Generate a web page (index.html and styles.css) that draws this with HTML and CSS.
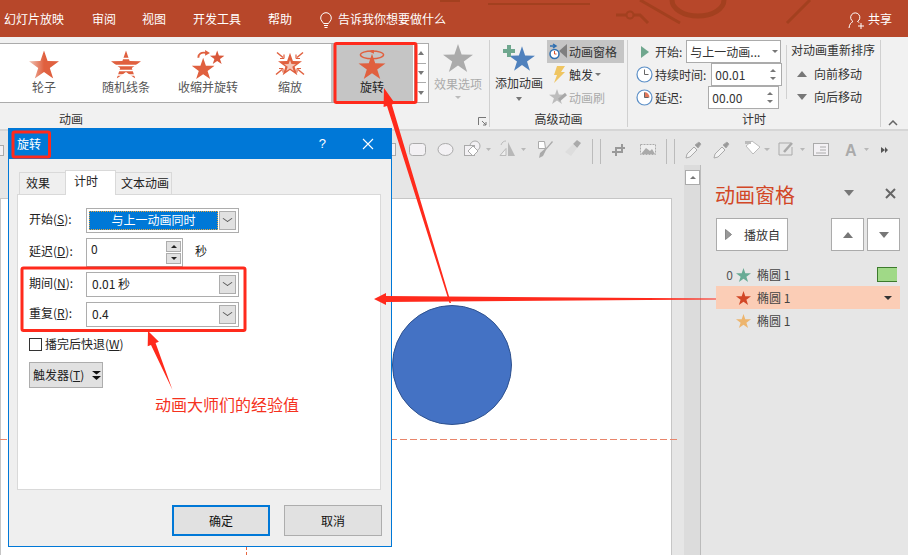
FILE: index.html
```html
<!DOCTYPE html>
<html lang="zh">
<head>
<meta charset="utf-8">
<title>动画窗格</title>
<link rel="stylesheet" href="styles.css">
</head>
<body>

<svg class="defs" width="0" height="0">
  <defs>
    <linearGradient id="fade" x1="0" x2="1" y1="0" y2="0">
      <stop offset="0" stop-color="#f0c4b6"/>
      <stop offset=".5" stop-color="#e0603f"/>
    </linearGradient>
  </defs>
  <symbol id="star" viewBox="0 0 30 28"><polygon points="15,0 18.6,10.4 30,10.7 20.8,17.4 24.2,28 15,21.6 5.8,28 9.2,17.4 0,10.7 11.4,10.4"/></symbol>
</svg>

<div class="app">

  <div class="titlebar">
    <svg class="circuit" width="908" height="37" viewBox="0 0 908 37">
      <g fill="none" stroke="#a3401f">
        <path d="M440 1h20M488 4h102" stroke-width="2"/>
        <path d="M616 15h10M634 15h6l8 8" stroke-width="3"/>
        <circle cx="630" cy="15" r="3.500" stroke-width="2"/>
        <path d="M640 0l40 23M787 23l23 -23" stroke-width="3"/>
        <path d="M672 0a26 16 0 0 0 52 0" stroke-width="5"/>
      </g>
    </svg>
    <span class="tab tab-show">幻灯片放映</span>
    <span class="tab tab-review">审阅</span>
    <span class="tab tab-view">视图</span>
    <span class="tab tab-dev">开发工具</span>
    <span class="tab tab-help">帮助</span>
    <svg class="bulb" width="12" height="17" viewBox="0 0 12 17"><path d="M3.5 11.5C2.5 9.5 .7 8.6 .7 6a5.3 5.3 0 0 1 10.6 0c0 2.600-1.800 3.500-2.800 5.500zM4 13.500h4M4.500 15.500h3" fill="none" stroke="#fff"/></svg>
    <span class="tab tab-tell">告诉我你想要做什么</span>
    <svg class="person" width="17" height="17" viewBox="0 0 17 17"><path d="M1 16c.5-4 2-5.500 4-6.500a4.600 4.600 0 1 1 4.500 0c.8.400 1.300.7 1.800 1.200M10 14h6M13 11v6" fill="none" stroke="#fff"/></svg>
    <span class="tab">共享</span>
  </div>

  <div class="ribbon">
    <div class="group group-anim">
      <div class="group-body">
        <div class="gallery">
          <div class="effect">
            <svg class="effect-icon" width="30" height="28" viewBox="0 0 30 28"><use href="#star" fill="url(#fade)"/></svg>
            <span>轮子</span>
          </div>
          <div class="effect">
            <svg class="effect-icon" width="30" height="28" viewBox="0 0 30 28"><use href="#star" fill="#e0603f"/><path d="M0 8h30M0 15h30M0 20h30M0 24.500h30" stroke="#fff" stroke-width="1.500"/></svg>
            <span>随机线条</span>
          </div>
          <div class="effect">
            <svg class="effect-icon" width="34" height="30" viewBox="0 0 34 30"><use href="#star" x="0" y="8" width="24" height="22" fill="#e0603f"/><use href="#star" x="19" y="0" width="15" height="15" fill="#d9583a"/><path d="M7 8c0-4 3-6 8-5" fill="none" stroke="#e0603f" stroke-width="2"/><path d="M14 0l5 3-5 3z" fill="#e0603f"/></svg>
            <span>收缩并旋转</span>
          </div>
          <div class="effect">
            <svg class="effect-icon" width="30" height="28" viewBox="0 0 30 28"><use href="#star" x="3" width="24" height="27" fill="#e0603f"/><use href="#star" x="9" y="9" width="12" height="12" fill="#f3c6b8"/><path d="M2 2l6 5M28 2l-6 5M1 24l6-5M29 24l-6-5" stroke="#e0603f" stroke-width="1.500"/><path d="M9 8V4M9 8H5M21 8V4M21 8h4M8 18v4M8 18H4M22 18v4M22 18h4" stroke="#e0603f" stroke-width="1.200"/></svg>
            <span>缩放</span>
          </div>
          <div class="effect effect-on">
            <svg class="effect-icon" width="30" height="30" viewBox="0 0 30 30"><use href="#star" y="4" width="30" height="26" fill="#e0603f"/><ellipse cx="15" cy="5" rx="12" ry="4" fill="none" stroke="#e0603f" stroke-width="1.500"/><path d="M17 -1l-5 2.500 5 2.500z" fill="#e0603f"/></svg>
            <span>旋转</span>
          </div>
          <div class="gallery-spin">
            <i class="cell"><b class="tri-up"></b></i>
            <i class="cell"><b class="tri-down"></b></i>
            <i class="cell cell-more"><b class="tri-down"></b></i>
          </div>
        </div>
        <div class="effect-options">
          <svg width="30" height="28" viewBox="0 0 30 28"><use href="#star" fill="#ababab"/></svg>
          <span>效果选项</span>
          <b class="tri-down tri-pale"></b>
        </div>
      </div>
      <div class="group-label label-anim">动画</div>
      <svg class="launcher" width="9" height="9" viewBox="0 0 9 9"><path d="M.5 8V.5H8M4 4l4 4M8 5v3H5" fill="none" stroke="#777"/></svg>
    </div>

    <div class="group group-adv">
      <div class="group-body">
        <div class="add-anim">
          <svg width="32" height="29" viewBox="0 0 32 29"><use href="#star" x="6" y="2" width="26" height="27" fill="#4f81bd"/><path d="M0 8h12M6 2v12" stroke="#6fa78e" stroke-width="4"/></svg>
          <span>添加动画</span>
          <b class="tri-down"></b>
        </div>
        <div class="adv-list">
          <div class="adv-item adv-on">
            <svg width="18" height="17" viewBox="0 0 18 17"><circle cx="5.500" cy="11" r="4.500" fill="#fff" stroke="#2f6fb0" stroke-width="1.500"/><path d="M5.500 8v3h2" fill="none" stroke="#d9532c"/><path d="M1 3h5M4 1l3 2-3 2" fill="none" stroke="#2f6fb0" stroke-width="1.500"/><path d="M18 1v14l-8-7z" fill="#7f7f7f"/></svg>
            <span>动画窗格</span>
          </div>
          <div class="adv-item">
            <svg width="18" height="17" viewBox="0 0 18 17"><path d="M8 0h8l-4 6h4L5 17l3-8H5z" fill="#efc561"/></svg>
            <span>触发</span><b class="tri-down tri-small"></b>
          </div>
          <div class="adv-item adv-dim">
            <svg width="18" height="17" viewBox="0 0 18 17"><use href="#star" width="16" height="15" fill="#bdbdbd"/><path d="M10 11l7-6" stroke="#a8a8a8" stroke-width="3"/></svg>
            <span>动画刷</span>
          </div>
        </div>
      </div>
      <div class="group-label">高级动画</div>
    </div>

    <div class="group group-timing">
      <div class="group-body">
        <div class="timing">
          <div class="timing-row">
            <svg class="timing-icon" width="17" height="17" viewBox="0 0 17 17"><path d="M5 3l8 6-8 6z" fill="#6fa78e"/></svg>
            <span class="timing-name">开始:</span>
            <div class="field field-start"><span>与上一动画...</span><b class="tri-down tri-small"></b></div>
          </div>
          <div class="timing-row">
            <svg class="timing-icon" width="17" height="17" viewBox="0 0 17 17"><circle cx="8.500" cy="8.500" r="7.500" fill="#fff" stroke="#5b8fc7" stroke-width="1.200"/><path d="M8.500 3.500v5h4" fill="none" stroke="#666"/></svg>
            <span class="timing-name">持续时间:</span>
            <div class="field field-dur"><span>00.01</span><i class="spin"><b class="tri-up tri-small"></b><b class="tri-down tri-small"></b></i></div>
          </div>
          <div class="timing-row">
            <svg class="timing-icon" width="17" height="17" viewBox="0 0 17 17"><circle cx="8.500" cy="8.500" r="7.500" fill="#fff" stroke="#5b8fc7" stroke-width="1.200"/><path d="M8.500 3v5.500h5A5.500 5.500 0 0 0 8.500 3z" fill="#e2765a"/><path d="M8.500 3.500v5h4" fill="none" stroke="#666"/></svg>
            <span class="timing-name">延迟:</span>
            <div class="field field-delay"><span>00.00</span><i class="spin"><b class="tri-up tri-small"></b><b class="tri-down tri-small"></b></i></div>
          </div>
        </div>
        <div class="reorder">
          <div class="reorder-title">对动画重新排序</div>
          <div class="reorder-item"><b class="tri-up"></b><span>向前移动</span></div>
          <div class="reorder-item"><b class="tri-down"></b><span>向后移动</span></div>
        </div>
      </div>
      <div class="group-label">计时</div>
    </div>

    <svg class="collapse" width="10" height="6" viewBox="0 0 10 6"><path d="M1 5l4-4 4 4" fill="none" stroke="#666" stroke-width="1.500"/></svg>
  </div>

  <svg class="toolbar" width="908" height="34" viewBox="0 0 908 34">
    <g fill="#f3f1f4" stroke="#aaa">
      <rect x="-12.500" y="14.500" width="16" height="10"/>
      <rect x="380.500" y="12.500" width="15" height="12"/>
      <rect x="409.500" y="12.500" width="16" height="12" rx="3"/>
      <ellipse cx="445.500" cy="18.500" rx="7.500" ry="6"/>
      <circle cx="475" cy="15" r="5"/>
      <rect x="464.500" y="14.500" width="10" height="10"/>
      <path d="M473 15l5 5-5 5-5-5z" fill="#fff"/>
    </g>
    <g fill="#b8b8b8">
      <path d="M486 17h5l-2.500 3zM521 17h5l-2.500 3zM764 17h6l-3 3zM800 17h5l-2.500 3zM864 17h5l-2.500 3z"/>
      <path d="M508 11l7 14h-7z"/>
      <path d="M500 24.500l6-7v7z" fill="#eee" stroke="#bbb"/>
      <path d="M501 14c1-3 3-4 5-4" fill="none" stroke="#bbb"/>
      <path d="M538.500 10.500h6l1 7h-7z" fill="#fff" stroke="#aaa"/>
      <path d="M553 11l-7 8-3 6-4 2 1-5 7-6 5-6z" fill="#aaa"/>
      <path d="M581 12l-4-3-4 4 4 4z" fill="#aaa"/>
      <path d="M573 13l4 4-6 8-6-4z" fill="#ddd"/>
      <path d="M640.500 13.500h15v10h-15z" fill="#eee" stroke="#aaa" stroke-dasharray="2 1"/>
      <path d="M641 23l5-6 4 3 2-2 3 5z" fill="#aaa"/>
      <path d="M746 15l6-5 8 6-7 7z" fill="#fff" stroke="#bbb"/>
      <path d="M745 10h6v3h-6z" fill="#bbb"/>
      <path d="M881 16l4 3-4 3zM885 16l3 3-3 3z" fill="#555"/>
    </g>
    <g fill="none" stroke="#aaa" stroke-width="1">
      <path d="M592.500 8v25M600.500 8v25M666.500 8v25M674.500 8v25" stroke="#bbb"/>
      <path d="M612 21h10v-8M616 25v-8h9" stroke="#999" stroke-width="2"/>
      <path d="M686 27l1-4 7-7 3 3-7 7z" fill="#f3f3f3"/>
      <path d="M695 14l4-3 2 2-3 4z" fill="#999"/>
      <path d="M714 27l1-4 7-7 3 3-7 7z" fill="#f3f3f3"/>
      <path d="M723 14l4-3 2 2-3 4z" fill="#999"/>
      <path d="M791 12h-12v12h13v-8"/>
      <path d="M784 21l8-9" stroke-width="2.500"/>
      <rect x="813.500" y="12.500" width="15" height="12" fill="#f3f1f4"/>
      <path d="M820 16h6M820 19h6M816 22h10"/>
    </g>
    <text class="toolbar-a" x="845" y="25">A</text>
  </svg>

  <div class="workspace">
    <div class="slide-area">
      <div class="slide"></div>
    </div>
    <div class="scrollbar">
      <div class="scroll-up"><b class="tri-up tri-small"></b></div>
    </div>
    <div class="pane">
      <div class="pane-head">
        <span class="pane-title">动画窗格</span>
        <b class="tri-down tri-pane"></b>
        <svg class="pane-close" width="11" height="11" viewBox="0 0 11 11"><path d="M1 1l9 9M10 1l-9 9" stroke="#666" stroke-width="2"/></svg>
      </div>
      <div class="pane-tools">
        <div class="play-btn"><svg width="7" height="11" viewBox="0 0 7 11"><path d="M.5.500l6 5-6 5z" fill="#999" stroke="#888"/></svg><span>播放自</span></div>
        <div class="move-btn"><b class="tri-up"></b></div>
        <div class="move-btn"><b class="tri-down"></b></div>
      </div>
      <div class="pane-list">
        <div class="pane-row">
          <span class="row-num">0</span>
          <svg width="15" height="14" viewBox="0 0 30 28"><use href="#star" fill="#68ab95"/></svg>
          <span>椭圆 1</span>
          <i class="row-bar"></i>
        </div>
        <div class="pane-row pane-row-on">
          <span class="row-num"></span>
          <svg width="15" height="14" viewBox="0 0 30 28"><use href="#star" fill="#d24726"/></svg>
          <span>椭圆 1</span>
          <b class="tri-down tri-row"></b>
        </div>
        <div class="pane-row">
          <span class="row-num"></span>
          <svg width="15" height="14" viewBox="0 0 30 28"><use href="#star" fill="#edb56e"/></svg>
          <span>椭圆 1</span>
        </div>
      </div>
    </div>
  </div>

  <!-- things lying on the slide -->
  <div class="guide-h"></div>
  <div class="guide-v"></div>
  <div class="circle"></div>

  <div class="dialog">
    <div class="dialog-title">
      <span>旋转</span>
      <span class="dialog-help">?</span>
      <svg width="12" height="12" viewBox="0 0 12 12"><path d="M1 1l10 10M11 1L1 11" stroke="#fff" stroke-width="1.100"/></svg>
    </div>
    <div class="dialog-body">
      <div class="tabs">
        <span class="dtab dtab-a">效果</span>
        <span class="dtab dtab-on">计时</span>
        <span class="dtab dtab-c">文本动画</span>
      </div>
      <div class="panel">
        <div class="form-row">
          <label>开始(<u>S</u>):</label>
          <div class="combo"><span class="combo-sel">与上一动画同时</span><i class="combo-btn"></i></div>
        </div>
        <div class="form-row">
          <label>延迟(<u>D</u>):</label>
          <div class="spinner"><span>0</span><i class="spinner-btns"><b class="sb"><b class="tri-up tri-small tri-dark"></b></b><b class="sb"><b class="tri-down tri-small tri-dark"></b></b></i></div>
          <span class="unit">秒</span>
        </div>
        <div class="form-row">
          <label>期间(<u>N</u>):</label>
          <div class="combo"><span class="combo-text">0.01 秒</span><i class="combo-btn"></i></div>
        </div>
        <div class="form-row">
          <label>重复(<u>R</u>):</label>
          <div class="combo"><span class="combo-text">0.4</span><i class="combo-btn"></i></div>
        </div>
        <div class="check-row"><i class="check"></i><span>播完后快退(<u>W</u>)</span></div>
        <div class="trigger-btn"><span>触发器(<u>T</u>)</span><svg width="9" height="9" viewBox="0 0 9 9"><path d="M0 0h9L4.500 3.500zM0 5h9L4.500 9z" fill="#111"/></svg></div>
      </div>
      <div class="dialog-actions">
        <span class="btn btn-default">确定</span>
        <span class="btn">取消</span>
      </div>
    </div>
  </div>

  <svg class="marks" width="908" height="555" viewBox="0 0 908 555">
    <g fill="none" stroke="#ff2a1c" stroke-width="3">
      <rect x="335" y="43.500" width="81" height="59" rx="1.500"/>
      <rect x="13" y="132" width="36.500" height="25" rx="1.500"/>
      <rect x="22" y="268" width="223" height="62.500" rx="1.500"/>
    </g>
    <g fill="#ff2a1c">
      <polygon points="451,303 449.500,303 387,106 383.600,107 384,88 395,103.400 391.800,104.400"/>
      <polygon points="716,298.500 716,299.500 386,302 386,305 374,299 386,293 386,296"/>
      <polygon points="172.500,390 155.600,343 158.900,341.700 148,331 147.700,346.300 151,344.900"/>
    </g>
  </svg>
  <div class="note">动画大师们的经验值</div>

</div>

</body>
</html>
```

FILE: styles.css
```css
* {
  box-sizing: border-box;
}

html, body {
  margin: 0;
  padding: 0;
}

body {
  font-family: "Noto Sans CJK SC", "Liberation Sans", sans-serif;
  font-size: 12px;
  line-height: 16px;
  color: #333;
  background: #e6e6e6;
}

i, b {
  display: block;
  font-style: normal;
}

svg {
  display: block;
  flex: none;
}

.defs {
  position: absolute;
}

.app {
  position: relative;
  width: 908px;
  height: 555px;
  overflow: hidden;
}

/* triangles */
.tri-up, .tri-down {
  width: 0;
  height: 0;
  flex: none;
  border-left: 5px solid transparent;
  border-right: 5px solid transparent;
}

.tri-up {
  border-bottom: 6px solid #777;
}

.tri-down {
  border-top: 6px solid #777;
}

.tri-small {
  border-left-width: 3px;
  border-right-width: 3px;
  border-top-width: 3px;
  border-bottom-width: 3px;
}

.tri-pale {
  border-top-color: #bbb;
  border-left-width: 3px;
  border-right-width: 3px;
  border-top-width: 3px;
}

.tri-dark.tri-up {
  border-bottom-color: #222;
}

.tri-dark.tri-down {
  border-top-color: #222;
}

/* title bar */
.titlebar {
  position: relative;
  display: flex;
  align-items: center;
  height: 37px;
  padding: 0 16px 0 4px;
  background: #b7472a;
  color: #fff;
}

.circuit {
  position: absolute;
  left: 0;
  top: 0;
}

.tab {
  position: relative;
  line-height: 40px;
}

.tab-review { margin-left: 28px; }
.tab-view { margin-left: 26px; }
.tab-dev { margin-left: 27px; }
.tab-help { margin-left: 27px; }

.bulb {
  position: relative;
  margin: 3px 6px 0 28px;
}

.person {
  position: relative;
  margin: 3px 3px 0 auto;
}

/* ribbon */
.ribbon {
  position: relative;
  display: flex;
  height: 94px;
  padding-top: 3px;
  background: #f1f1f1;
  border-bottom: 2px solid #d6d6d6;
}

.group {
  position: relative;
  display: flex;
  flex-direction: column;
  border-right: 1px solid #d0d0d0;
  height: 87px;
}

.group-anim { width: 490px; }
.group-adv { width: 138px; }
.group-timing { width: 253px; }

.group-body {
  display: flex;
  height: 72px;
}

.group-label {
  margin-top: 2px;
  text-align: center;
  line-height: 16px;
}

.group-anim .label-anim {
  width: 142px;
  margin-top: 1px;
}

.launcher {
  position: absolute;
  left: 478px;
  top: 77px;
}

.collapse {
  position: absolute;
  left: 888px;
  top: 83px;
}

.gallery {
  display: flex;
  height: 60px;
  width: 429px;
  margin-top: 3px;
  background: #fff;
  border: 1px solid #ababab;
  border-left: 0;
}

.effect {
  display: flex;
  flex-direction: column;
  align-items: center;
  width: 82px;
  padding-top: 6px;
  color: #555;
}

.effect:first-child {
  margin-left: 3px;
}

.effect-icon {
  height: 29px;
}

.effect span {
  margin-top: 0;
}

.effect-on {
  background: #c5c5c5;
  color: #222;
}

.gallery-spin {
  display: flex;
  flex-direction: column;
  width: 12px;
  margin-left: 1px;
  border-left: 1px solid #ababab;
}

.cell {
  flex: 1;
  display: flex;
  align-items: center;
  justify-content: center;
  border-bottom: 1px solid #ababab;
}

.cell .tri-up, .cell .tri-down {
  border-left-width: 3px;
  border-right-width: 3px;
  border-top-width: 4px;
  border-bottom-width: 4px;
}

.cell-more {
  border-bottom: 0;
}

.effect-options {
  display: flex;
  flex-direction: column;
  align-items: center;
  width: 48px;
  margin-left: 5px;
  padding-top: 4px;
  color: #aaa;
}

.effect-options span {
  margin-top: 3px;
  line-height: 17px;
}

.effect-options b {
  margin-top: 4px;
}

.add-anim {
  display: flex;
  flex-direction: column;
  align-items: center;
  width: 52px;
  margin-left: 3px;
  padding-top: 3px;
}

.add-anim span {
  margin-top: 3px;
}

.add-anim b {
  margin-top: 6px;
  border-left-width: 3px;
  border-right-width: 3px;
  border-top-width: 4px;
}

.adv-list {
  display: flex;
  flex-direction: column;
  gap: 0;
  margin-left: 2px;
}

.adv-item {
  display: flex;
  align-items: center;
  gap: 2px;
  width: 77px;
  height: 23px;
}

.adv-on {
  background: #c5c5c5;
}

.adv-dim {
  color: #aaa;
}

.adv-item svg {
  margin-left: 2px;
}

.timing {
  display: flex;
  flex-direction: column;
  width: 158px;
}

.timing-row {
  display: flex;
  align-items: center;
  height: 23px;
  padding-left: 8px;
}

.timing-icon {
  margin-right: 2px;
}

.field {
  display: flex;
  align-items: center;
  height: 23px;
  background: #fff;
  border: 1px solid #ababab;
  padding: 0 2px 0 3px;
}

.field span {
  flex: 1;
}

.field-start {
  width: 95px;
  margin-left: 4px;
}

.field-dur {
  width: 71px;
  margin-left: 5px;
}

.field-delay {
  width: 71px;
  margin-left: 26px;
}

.spin {
  display: flex;
  flex-direction: column;
  gap: 5px;
  margin-right: 3px;
}

.reorder {
  width: 90px;
  padding: 0 0 0 5px;
  background: linear-gradient(#d0d0d0, #d0d0d0) left 5px / 1px 54px no-repeat;
}

.reorder-title {
  height: 22px;
  line-height: 20px;
}

.reorder-item {
  display: flex;
  align-items: center;
  gap: 7px;
  height: 23px;
  padding-left: 6px;
}

/* small toolbar under the ribbon */
.toolbar {
  background: #e6e6e6;
}

.toolbar-a {
  font-family: "Liberation Sans", sans-serif;
  font-size: 16px;
  font-weight: 700;
  fill: #aaa;
}

/* main area */
.workspace {
  display: flex;
  height: 390px;
}

.slide-area {
  width: 684px;
  padding: 33px 12px 0 0;
}

.slide {
  height: 400px;
  background: #fff;
  border: 1px solid #c6c6c6;
}

.scrollbar {
  width: 17px;
  padding-top: 5px;
  background: #dcdcdc;
  border-right: 1px solid #bbb;
}

.scroll-up {
  display: flex;
  align-items: center;
  justify-content: center;
  width: 15px;
  height: 15px;
  margin-left: 1px;
  background: #fff;
  border: 1px solid #ababab;
}

.pane {
  flex: 1;
  padding: 19px 8px 0 15px;
}

.pane-head {
  position: relative;
  display: flex;
  align-items: center;
  height: 21px;
}

.pane-title {
  margin-left: -1px;
  font-size: 20px;
  line-height: 20px;
  color: #d24726;
}

.tri-pane {
  margin-left: 49px;
  margin-top: -4px;
}

.pane-close {
  margin-left: 31px;
  margin-top: -2px;
}

.pane-tools {
  display: flex;
  margin-top: 13px;
}

.play-btn {
  display: flex;
  align-items: center;
  gap: 12px;
  width: 72px;
  height: 33px;
  padding-left: 8px;
  background: #fff;
  border: 1px solid #ababab;
}

.move-btn {
  display: flex;
  align-items: center;
  justify-content: center;
  width: 33px;
  height: 33px;
  margin-left: 3px;
  background: #fff;
  border: 1px solid #ababab;
}

.play-btn + .move-btn {
  margin-left: 43px;
}

.pane-list {
  margin-top: 12px;
  color: #444;
}

.pane-row {
  display: flex;
  align-items: center;
  height: 23px;
  gap: 6px;
}

.pane-row-on {
  background: #fbcdb6;
}

.row-num {
  width: 17px;
  text-align: right;
  margin-right: -3px;
  color: #555;
}

.row-bar {
  width: 20px;
  height: 15px;
  margin-left: auto;
  margin-right: 3px;
  background: #a0d987;
  border: 1px solid #3c7a2c;
  border-right: 0;
}

.tri-row {
  margin-left: auto;
  margin-right: 8px;
  border-left-width: 4px;
  border-right-width: 4px;
  border-top-width: 4px;
  border-top-color: #333;
}

/* shape and guides on the slide */
.guide-h {
  position: absolute;
  left: 0;
  top: 439px;
  width: 680px;
  height: 1px;
  background: repeating-linear-gradient(90deg, #e8856b 0 7px, transparent 7px 10px);
}

.guide-v {
  position: absolute;
  left: 246px;
  top: 546px;
  width: 1px;
  height: 9px;
  background: repeating-linear-gradient(#e8653f 0 4px, transparent 4px 6px);
}

.circle {
  position: absolute;
  left: 392px;
  top: 305px;
  width: 120px;
  height: 120px;
  border-radius: 50%;
  background: #4472c4;
  border: 1px solid #2f528f;
}

/* dialog */
.dialog {
  position: absolute;
  left: 8px;
  top: 128px;
  width: 384px;
  height: 419px;
  background: #efefef;
  border: 1px solid #0078d7;
}

.dialog-title {
  display: flex;
  align-items: center;
  height: 30px;
  padding: 0 17px 0 8px;
  background: #0078d7;
  color: #fff;
}

.dialog-help {
  margin-left: auto;
  margin-right: 36px;
  font-family: "Liberation Sans", sans-serif;
  font-size: 13px;
}

.dialog-body {
  padding: 10px 9px 0 8px;
}

.tabs {
  display: flex;
  align-items: flex-end;
  height: 25px;
  padding-left: 2px;
  color: #222;
}

.dtab {
  height: 22px;
  line-height: 20px;
  background: #efefef;
  border: 1px solid #d9d9d9;
  border-bottom: 0;
}

.dtab-a {
  width: 46px;
  padding-left: 6px;
  border-right: 0;
}

.dtab-on {
  position: relative;
  z-index: 1;
  width: 51px;
  height: 25px;
  margin-bottom: -1px;
  padding-left: 8px;
  background: #fff;
}

.dtab-c {
  width: 56px;
  padding-left: 5px;
  border-left: 0;
}

.panel {
  width: 364px;
  height: 296px;
  padding: 13px 0 0 11px;
  background: #fff;
  border: 1px solid #d9d9d9;
  color: #222;
}

.form-row {
  display: flex;
  align-items: center;
  margin-bottom: 5px;
}

.form-row label {
  width: 57px;
  padding-bottom: 3px;
}

.combo {
  display: flex;
  align-items: center;
  justify-content: space-between;
  width: 153px;
  height: 25px;
  padding: 2px;
  border: 1px solid #adadad;
}

.combo-sel {
  flex: 1;
  height: 19px;
  line-height: 15px;
  text-align: center;
  color: #fff;
  background: #0078d7;
  border: 1px dotted #e8a33d;
}

.combo-text {
  padding: 0 0 2px 3px;
}

.combo-btn {
  position: relative;
  width: 17px;
  height: 19px;
  margin-left: 1px;
  background: #e1e1e1;
  border: 1px solid #adadad;
}

.combo-btn::after {
  content: "";
  position: absolute;
  left: 4px;
  top: 3px;
  width: 6px;
  height: 6px;
  border-right: 1px solid #555;
  border-bottom: 1px solid #555;
  transform: scaleY(.7) rotate(45deg);
}

.spinner {
  display: flex;
  justify-content: space-between;
  width: 97px;
  height: 29px;
  padding: 2px 1px 2px 4px;
  border: 1px solid #adadad;
}

.spinner-btns {
  display: flex;
  flex-direction: column;
  gap: 1px;
}

.sb {
  display: flex;
  align-items: center;
  justify-content: center;
  width: 15px;
  height: 12px;
  background: #e1e1e1;
  border: 1px solid #adadad;
}

.unit {
  margin-left: 12px;
  padding-bottom: 3px;
}

.check-row {
  display: flex;
  align-items: center;
  gap: 3px;
  height: 14px;
  margin-top: 10px;
}

.check {
  width: 13px;
  height: 13px;
  border: 1px solid #333;
}

.trigger-btn {
  display: flex;
  align-items: center;
  gap: 8px;
  width: 74px;
  height: 26px;
  margin-top: 11px;
  padding-left: 3px;
  background: #e1e1e1;
  border: 1px solid #adadad;
}

.dialog-actions {
  display: flex;
  justify-content: flex-end;
  gap: 14px;
  margin-top: 15px;
}

.btn {
  width: 98px;
  height: 31px;
  line-height: 29px;
  text-align: center;
  background: #e1e1e1;
  border: 1px solid #adadad;
  color: #111;
}

.btn-default {
  border: 2px solid #0078d7;
  line-height: 27px;
}

/* red annotations */
.marks {
  position: absolute;
  left: 0;
  top: 0;
}

.note {
  position: absolute;
  left: 155px;
  top: 394px;
  font-size: 16px;
  line-height: 20px;
  color: #f5321e;
}
```
